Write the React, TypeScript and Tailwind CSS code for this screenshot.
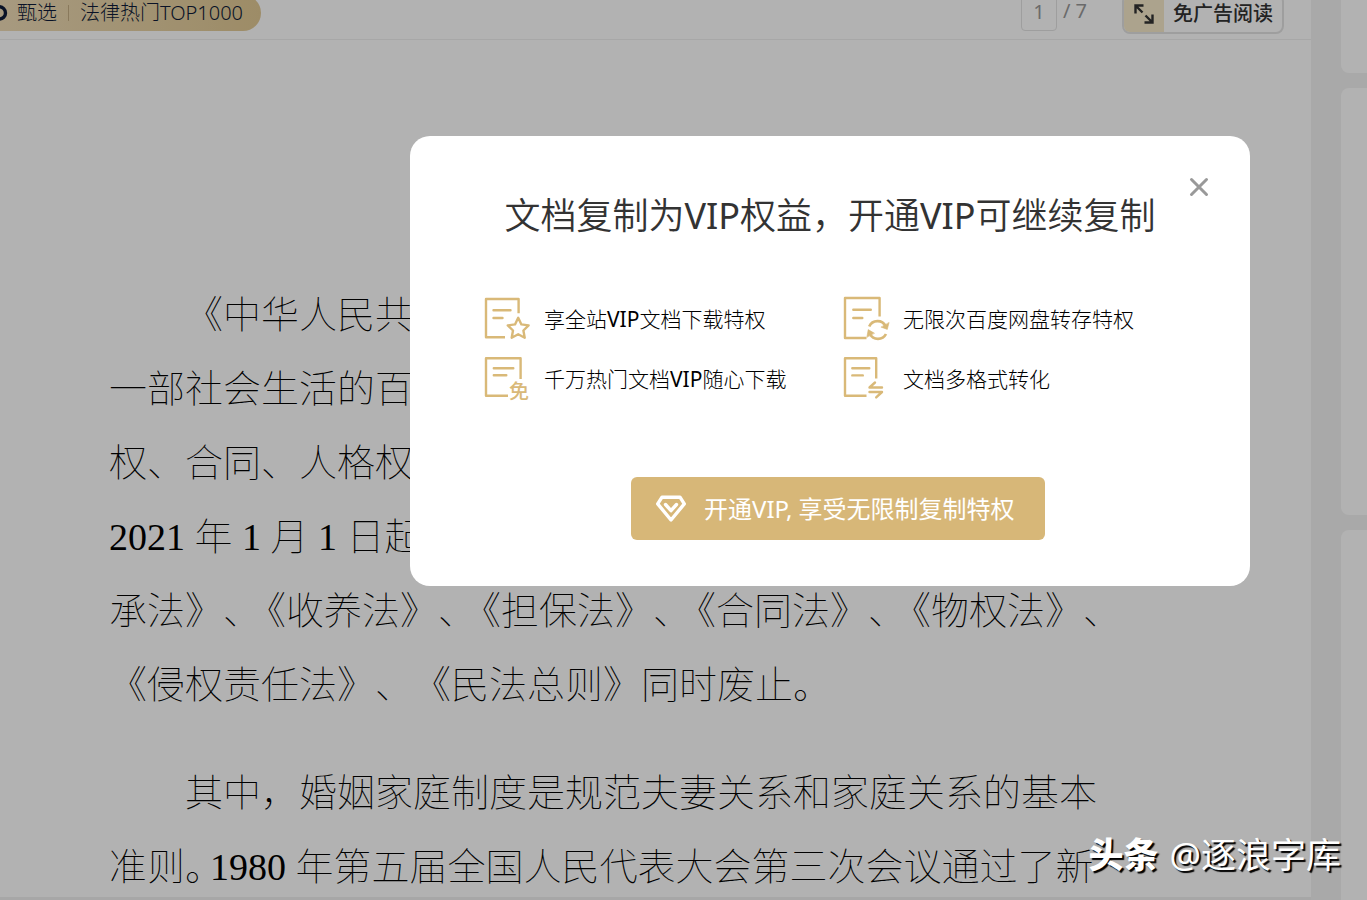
import React from 'react';

const paragraphs = [
  [
    ['《中华人民共和国民法典》被称为社会生活'],
    ['一部社会生活的百科全书，分为总则编、物'],
    ['权、合同、人格权、婚姻家庭、继承等，自'],
    ['2021 年 1 月 1 日起施行。《婚姻法》、《继'],
    ['承法》、', '《收养法》、', '《担保法》、', '《合同法》、', '《物权法》、'],
    ['《侵权责任法》、《民法总则》同时废止。'],
  ],
  [
    ['其中，婚姻家庭制度是规范夫妻关系和家庭关系的基本'],
    ['准则。', '1980 年第五届全国人民代表大会第三次会议通过了新'],
  ],
];

function StarDocIcon() {
  return (
    <svg className="h-12 w-12 shrink-0" viewBox="0 0 48 48" fill="none" stroke="#d9b978" strokeWidth="2.4" strokeLinecap="round" strokeLinejoin="round">
      <path d="M21 41.3H2V3h32.6v14.2" strokeLinecap="butt" />
      <path d="M9.5 14.3h17M9.5 22h9" />
      <path d="M34.2 21.8l3.2 6.6 7.2 1-5.2 5.1 1.3 7.2-6.5-3.4-6.5 3.4 1.3-7.2-5.2-5.1 7.2-1z" />
    </svg>
  );
}

function RefreshDocIcon() {
  return (
    <svg className="h-12 w-12 shrink-0" viewBox="0 0 48 48" fill="none" stroke="#d9b978" strokeWidth="2.4" strokeLinecap="round" strokeLinejoin="round">
      <path d="M23.5 42H2V2h34.6v18.5" strokeLinecap="butt" />
      <path d="M10.3 13.7h17.5M10.3 22h9" />
      <path d="M26.2 30.5c3.2-6.8 13-7.3 16.4-.2M43 38c-3.3 6.4-12.7 6.6-16 0" strokeLinecap="butt" strokeWidth="2.7" />
      <path d="M46 26.8l-1.7 6.6-6-2.2zM23.9 41l1.3-7.4 6 3.5z" fill="#d9b978" strokeWidth="0.6" />
    </svg>
  );
}

function FreeDocIcon() {
  return (
    <svg className="h-12 w-12 shrink-0" viewBox="0 0 48 48" fill="none" stroke="#d9b978" strokeWidth="2.4" strokeLinecap="round" strokeLinejoin="round">
      <path d="M24 39.7H2V2.2h34.6V23" strokeLinecap="butt" />
      <path d="M9.8 12.2h19.5M9.8 19.2h12.5" />
      <text x="25" y="43" fontSize="20" fontWeight="500" fill="#d9b978" stroke="none" fontFamily="Noto Sans CJK SC, sans-serif">免</text>
    </svg>
  );
}

function ConvertDocIcon() {
  return (
    <svg className="h-12 w-12 shrink-0" viewBox="0 0 48 48" fill="none" stroke="#d9b978" strokeWidth="2.4" strokeLinecap="round" strokeLinejoin="round">
      <path d="M23.5 39.7H2V2.2h31.2V22.5" strokeLinecap="butt" />
      <path d="M9.3 12.2h17M9.3 19.4h10.5" />
      <path d="M39 31.5H26.5l5.5-5M26.5 36H39l-5.8 5.4" />
    </svg>
  );
}

const benefits = [
  { icon: <StarDocIcon />, label: '享全站VIP文档下载特权' },
  { icon: <RefreshDocIcon />, label: '无限次百度网盘转存特权' },
  { icon: <FreeDocIcon />, label: '千万热门文档VIP随心下载' },
  { icon: <ConvertDocIcon />, label: '文档多格式转化' },
];

function ReaderHeader() {
  return (
    <header className="flex h-10 items-end justify-between overflow-hidden border-b border-[#f0f0f0] pr-[27px]">
      <a href="#top" className="mb-2 flex h-9 items-center rounded-r-full bg-gradient-to-r from-[#efdcb7] to-[#e1c994] pr-[18px] text-xl text-[#0e1b38]">
        <svg className="mr-[9px] h-5 w-2" viewBox="0 0 8 20" fill="none" stroke="#0e1b38" strokeWidth="3.4">
          <path d="M-3 3.8h2.4a5.6 5.6 0 0 1 0 12.2H-3" />
        </svg>
        <span className="font-light">甄选</span>
        <span className="mx-[11px] h-4 w-px bg-[#c5ae84]" />
        <span className="font-light">法律热门TOP1000</span>
      </a>
      <div className="flex items-end">
        <label className="mb-2 flex items-center text-xl text-[#999]">
          <input aria-label="页码" defaultValue="1" className="mr-[6px] h-9 w-9 rounded border border-[#e3e3e3] bg-white pb-1 text-center" />
          <span className="pb-1">/ 7</span>
        </label>
        <button className="mb-[5px] ml-[35px] flex h-10 items-center overflow-hidden rounded-lg border-2 border-[#e3e3e3] bg-white text-xl font-medium text-[#333]">
          <span className="flex h-full w-10 items-center justify-center bg-[#f7eacb]">
            <svg className="h-5 w-5" viewBox="0 0 20 20" fill="none" stroke="#333" strokeWidth="2.4">
              <path d="M1.5 9.5v-8h8M2 2l6.5 6.5M18.500 10.500v8h-8M18 18l-6.500-6.500" />
            </svg>
          </span>
          <span className="px-[9px]">免广告阅读</span>
        </button>
      </div>
    </header>
  );
}

function VipDialog() {
  return (
    <section role="dialog" aria-labelledby="vip-title" className="relative h-[450px] w-[840px] rounded-[20px] bg-white pt-[53px]">
      <button aria-label="关闭" className="absolute right-10 top-10 p-px">
        <svg className="h-5 w-5" viewBox="0 0 20 20" stroke="#999" strokeWidth="3" strokeLinecap="round">
          <path d="M2.500 2.500l15 15M17.500 2.500l-15 15" />
        </svg>
      </button>
      <h2 id="vip-title" className="text-center font-['Noto_Sans','Noto_Sans_CJK_SC_DemiLight','Noto_Sans_CJK_SC',sans-serif] text-4xl leading-[54px] font-normal text-[#333]">
        文档复制为VIP权益，开通VIP可继续复制
      </h2>
      <ul className="mt-[53px] grid grid-cols-[359px_1fr] gap-y-3 pl-[74px]">
        {benefits.map((item) => (
          <li key={item.label} className="flex items-center gap-3 font-['Noto_Sans','Noto_Sans_CJK_SC_Light','Noto_Sans_CJK_SC',sans-serif] text-[21px] text-black">
            {item.icon}
            <span>{item.label}</span>
          </li>
        ))}
      </ul>
      <div className="mt-[73px] flex justify-center pl-4">
        <button className="flex h-[63px] w-[414px] items-center gap-[18px] rounded-md bg-[#d7b778] px-[25px] text-2xl text-white">
          <svg className="h-7 w-[30px]" viewBox="0 0 30 28" fill="none" stroke="#fff" strokeWidth="3.4" strokeLinejoin="round" strokeLinecap="round">
            <path d="M6 2.200h18l4.300 6.700L15 25 1.700 8.900z" />
            <path d="M9.500 9.500l5.500 6.200 5.500-6.200" />
          </svg>
          开通VIP, 享受无限制复制特权
        </button>
      </div>
    </section>
  );
}

export default function App() {
  return (
    <div className="relative flex h-screen overflow-hidden bg-[#f2f2f2] font-['Noto_Sans','Noto_Sans_CJK_SC',sans-serif]">
      <main className="flex min-w-0 flex-1 flex-col border-b-[3px] border-[#f0f0f0] bg-white">
        <ReaderHeader />
        <article className="flex min-h-0 flex-1 flex-col gap-[34px] overflow-hidden pt-[238px] pl-[109px] font-['Liberation_Serif','Noto_Sans_CJK_SC',serif] text-[38px] leading-[74px] font-thin text-black [text-spacing-trim:space-all]">
          {paragraphs.map((lines, i) => (
            <div key={i}>
              {lines.map((parts, j) => (
                <p key={j} className={i === 0 && j === 0 || i === 1 && j === 0 ? 'flex pl-[76px] whitespace-nowrap' : 'flex whitespace-nowrap'}>
                  {parts.map((part, k) => (
                    <span key={k} className={k > 0 ? '-ml-[13px]' : ''}>{part}</span>
                  ))}
                </p>
              ))}
            </div>
          ))}
        </article>
      </main>

      <aside className="ml-[30px] flex w-[26px] flex-col gap-[15px]">
        <div className="h-[73px] rounded-bl-lg bg-white" />
        <div className="h-[427px] rounded-l-lg bg-white" />
        <div className="flex-1 rounded-tl-lg bg-white" />
      </aside>

      {/* Mask and dialog */}
      <div className="absolute inset-0 flex items-start justify-end bg-black/30 pt-[136px] pr-[117px]">
        <VipDialog />
      </div>

      {/* Watermark */}
      <div className="absolute right-[26px] bottom-[19px] flex items-center gap-[11px] text-[35px] leading-[52px] text-white [text-shadow:2px_2px_1px_#000]">
        <span className="font-black">头条</span>
        <span>@逐浪字库</span>
      </div>
    </div>
  );
}
